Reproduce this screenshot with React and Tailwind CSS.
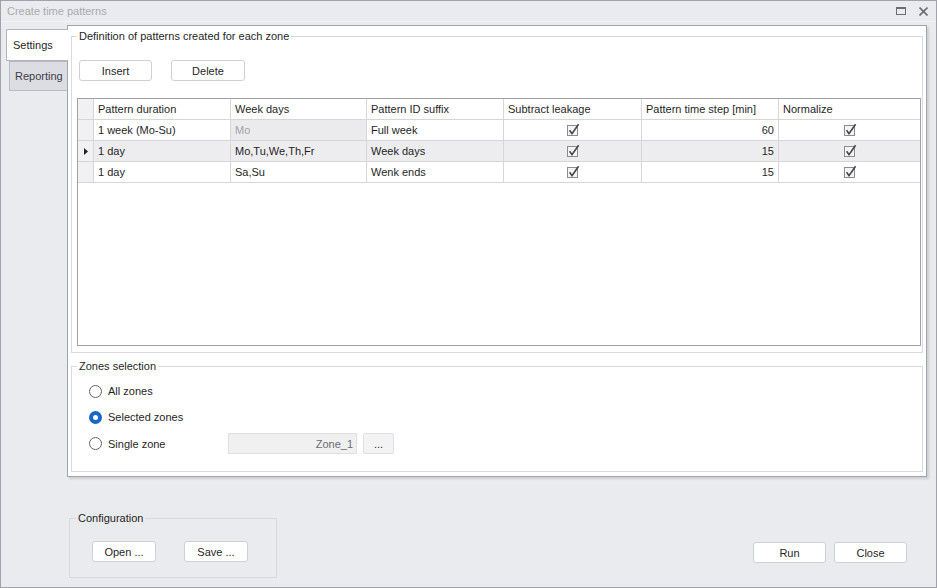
import React from "react";

// Rows of the pattern grid
const ROWS = [
  { duration: "1 week (Mo-Su)", days: "Mo", daysDisabled: true, suffix: "Full week", step: 60 },
  { duration: "1 day", days: "Mo,Tu,We,Th,Fr", suffix: "Week days", step: 15, current: true },
  { duration: "1 day", days: "Sa,Su", suffix: "Wenk ends", step: 15 },
];

const COLS = "grid grid-cols-[16px_137px_136px_137px_138px_137px_1fr]";

function Btn({ children, w }) {
  return (
    <button
      className={`h-[21px] ${w} bg-white border border-[#cfd0d5] rounded-[3px] text-[11px] text-[#1f1f26] flex items-center justify-center`}
    >
      {children}
    </button>
  );
}

function Check() {
  return (
    <svg width="14" height="14" viewBox="0 0 14 14">
      <rect x="1.5" y="2.5" width="10" height="10" fill="#f4f4f4" stroke="#8c8c90" />
      <path d="M3.6 7.2 L6 10.6 L12.6 1.2" fill="none" stroke="#45454a" strokeWidth="1.6" />
    </svg>
  );
}

function Radio({ checked, label }) {
  return (
    <div className="flex items-center h-[20px]">
      {checked ? (
        <div className="w-[13px] h-[13px] rounded-full bg-[#1866c6] flex items-center justify-center">
          <div className="w-[5px] h-[5px] rounded-full bg-white" />
        </div>
      ) : (
        <div className="w-[13px] h-[13px] rounded-full border border-[#626268] bg-white" />
      )}
      <span className="ml-[6px]">{label}</span>
    </div>
  );
}

export default function App() {
  return (
    <div className="w-[937px] h-[588px] bg-[#eaebee] border border-[#a2a2aa] flex flex-col text-[11px] leading-[14px] text-[#1f1f26] font-['Liberation_Sans',Arial,sans-serif]">
      {/* Title bar */}
      <div className="h-[21px] flex items-center pl-[6px] pr-[8px] border-b border-[#f3f4f6] text-[#a9a9b1]">
        <span>Create time patterns</span>
        <div className="ml-auto flex items-center gap-[13px]">
          <svg width="10" height="8" viewBox="0 0 10 8">
            <rect x="0.5" y="0.5" width="9" height="7" fill="none" stroke="#6c6c76" />
            <rect x="0" y="0" width="10" height="2" fill="#6c6c76" />
          </svg>
          <svg width="9" height="9" viewBox="0 0 9 9">
            <path d="M0.5 0.5 L8.5 8.5 M8.5 0.5 L0.5 8.5" stroke="#6c6c76" strokeWidth="1.6" />
          </svg>
        </div>
      </div>

      {/* Tabs + page */}
      <div className="flex mt-[3px] pl-[5px]">
        <div className="w-[61px] pt-[4px] flex flex-col">
          <div className="relative z-10 w-[62px] h-[32px] -mr-px bg-white border-l border-t border-b border-[#b3b3bb] rounded-tl-[2px] flex items-center pl-[6px]">
            Settings
          </div>
          <div className="ml-[3px] w-[58px] h-[30px] bg-[#dcdde2] border border-r-0 border-[#b9b9c1] flex items-center pl-[5px] text-[#3c3c46]">
            Reporting
          </div>
        </div>

        <div className="w-[860px] h-[452px] bg-white border border-[#a4a4ae] shadow-[2px_2px_2px_rgba(0,0,0,0.12)] flex flex-col px-[3px]">
          {/* Definition group */}
          <fieldset className="mt-[3px] w-[852px] border border-[#d9d9dc]">
            <legend className="ml-[5px] px-[2px]">Definition of patterns created for each zone</legend>
            <div className="pl-[5px] pb-[6px]">
              <div className="flex gap-[19px] ml-[2px] mt-[17px]">
                <Btn w="w-[73px]">Insert</Btn>
                <Btn w="w-[74px]">Delete</Btn>
              </div>

              <div className="mt-[17px] w-[844px] h-[248px] border border-[#a0a0aa] bg-white">
                <div className={`${COLS} h-[21px] border-b border-[#d6d6da]`}>
                  <div className="bg-[#f1f1f3] border-r border-[#d6d6da]" />
                  {["Pattern duration", "Week days", "Pattern ID suffix", "Subtract leakage", "Pattern time step [min]"].map((h) => (
                    <div key={h} className="border-r border-[#d6d6da] flex items-center pl-[4px]">{h}</div>
                  ))}
                  <div className="flex items-center pl-[4px]">Normalize</div>
                </div>
                {ROWS.map((r, i) => (
                  <div key={i} className={`${COLS} h-[21px] border-b border-[#d6d6da] ${r.current ? "bg-[#ededf0]" : ""}`}>
                    <div className="bg-[#f1f1f3] border-r border-[#d6d6da] flex items-center justify-center">
                      {r.current && (
                        <svg width="4" height="7" viewBox="0 0 4 7"><path d="M0 0 L4 3.5 L0 7 Z" fill="#222" /></svg>
                      )}
                    </div>
                    <div className="border-r border-[#d6d6da] flex items-center pl-[4px]">{r.duration}</div>
                    <div className={`border-r border-[#d6d6da] flex items-center pl-[4px] ${r.daysDisabled ? "bg-[#ebebee] text-[#a3a3a8]" : ""}`}>{r.days}</div>
                    <div className="border-r border-[#d6d6da] flex items-center pl-[4px]">{r.suffix}</div>
                    <div className="border-r border-[#d6d6da] flex items-center justify-center"><Check /></div>
                    <div className="border-r border-[#d6d6da] flex items-center justify-end pr-[4px]">{r.step}</div>
                    <div className="flex items-center justify-center"><Check /></div>
                  </div>
                ))}
              </div>
            </div>
          </fieldset>

          {/* Zones selection */}
          <fieldset className="mt-[6px] w-[852px] h-[113px] border border-[#d9d9dc]">
            <legend className="ml-[5px] px-[2px]">Zones selection</legend>
            <div className="pl-[17px] mt-[8px] flex flex-col gap-[6px]">
              <Radio label="All zones" />
              <Radio checked label="Selected zones" />
              <div className="flex items-center">
                <div className="w-[139px]"><Radio label="Single zone" /></div>
                <div className="w-[129px] h-[21px] bg-[#f0f0f1] border border-[#e0e0e3] flex items-center justify-end pr-[3px] text-[#6b6b72]">
                  Zone_1
                </div>
                <div className="ml-[6px] w-[31px] h-[21px] bg-[#f3f3f5] border border-[#e0e0e3] rounded-[2px] flex items-center justify-center">
                  ...
                </div>
              </div>
            </div>
          </fieldset>
        </div>
      </div>

      {/* Bottom: configuration + actions */}
      <div className="flex mt-[34px] pl-[68px] pr-[29px]">
        <fieldset className="w-[208px] h-[67px] border border-[#d9d9dc]">
          <legend className="ml-[6px] px-[2px]">Configuration</legend>
          <div className="pl-[22px] mt-[16px] flex gap-[28px]">
            <Btn w="w-[64px]">Open ...</Btn>
            <Btn w="w-[64px]">Save ...</Btn>
          </div>
        </fieldset>
        <div className="ml-auto self-end mb-[15px] flex gap-[8px]">
          <Btn w="w-[73px]">Run</Btn>
          <Btn w="w-[73px]">Close</Btn>
        </div>
      </div>
    </div>
  );
}
